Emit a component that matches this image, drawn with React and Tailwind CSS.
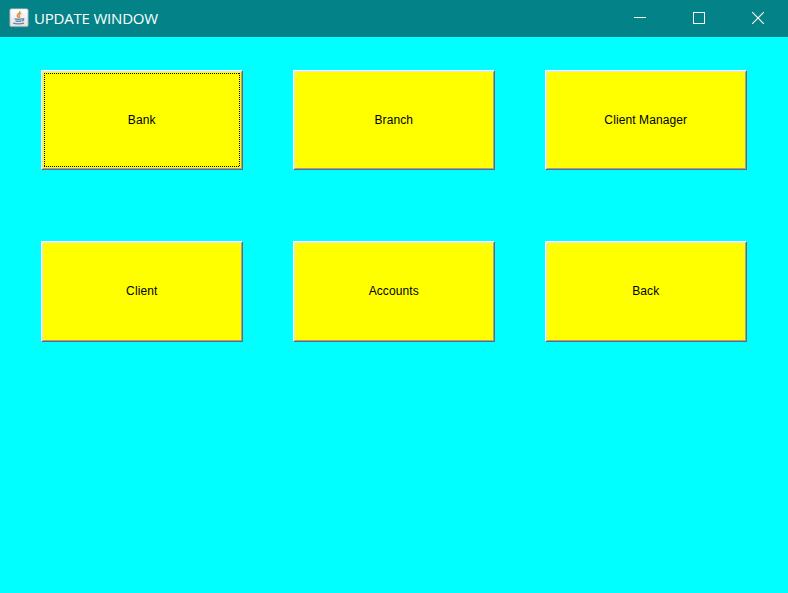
import React from "react";

const labels = ["Bank", "Branch", "Client Manager", "Client", "Accounts", "Back"];

function JavaIcon() {
  return (
    <svg className="ml-[9px] mt-[8px] h-[20px] w-[20px] shrink-0" viewBox="0 0 20 20">
      <defs>
        <linearGradient id="tile" x1="0" y1="0" x2="0" y2="1">
          <stop offset="0" stopColor="#ffffff" />
          <stop offset="1" stopColor="#dfe3e6" />
        </linearGradient>
      </defs>
      <rect x="0.8" y="0.7" width="18.4" height="18" rx="1.5" fill="url(#tile)" stroke="#8b9ba3" strokeWidth="0.8" />
      <path d="M10.8 3c.8 2-2.8 2.9-2.5 4.8.2 1 1.4 1.2 1.3 2.2M12.3 5.2c-2 .8-2.8 1.7-1.8 2.8.5.7.2 1.2-.3 1.8" fill="none" stroke="#e8954f" strokeWidth="1.5" />
      <path d="M5.5 10.8c1.5.6 6 .6 7.6 0M6.5 12.8c1.6.6 4 .6 5.6 0M4.2 15.2c2.5 1 8 1 10.8 0M13.2 10.8c2.3-.4 2 1.6-.6 2.2" fill="none" stroke="#6288a1" strokeWidth="1.3" />
    </svg>
  );
}

function BevelButton({ label, focused, tall }) {
  return (
    <button
      className={`${tall ? "h-[101px]" : "h-[100px]"} w-[202px] border border-t-white border-l-white border-r-[#696969] border-b-[#696969] bg-[#ffff00]`}
    >
      <span className="block h-full w-full border border-t-[#e3e3e3] border-l-[#e3e3e3] border-r-[#a0a0a0] border-b-[#a0a0a0]">
        <span
          className={`${tall ? "pb-[1px]" : "pb-0"} relative flex h-full w-full items-center justify-center pr-[0.5px] font-['Liberation_Sans',Arial,sans-serif] text-[12px] leading-[14px] tracking-[0.1px] text-black`}
        >
          {focused && (
            <svg className="absolute left-[1px] top-[1px] h-[94px] w-[196px]" shapeRendering="crispEdges">
              <path d="M0 .5H196M0 93.5H196M.5 0V94M195.5 0V94" stroke="#000" strokeDasharray="1 1" fill="none" />
            </svg>
          )}
          {label}
        </span>
      </span>
    </button>
  );
}

export default function App() {
  return (
    <div className="flex h-[593px] w-[788px] flex-col overflow-hidden bg-[#00ffff]">
      <header className="flex h-[37px] shrink-0 bg-[#038387] text-white">
        <JavaIcon />
        <h1 className="ml-[5px] mt-[7px] w-[126px] whitespace-nowrap font-['Open_Sans','Noto_Sans',sans-serif] text-[15px] leading-[22px] tracking-[-0.2px]">
          UPDATE WINDOW
        </h1>
        <div className="ml-auto flex w-[177px] shrink-0">
          <svg className="h-[37px] w-[59px]" shapeRendering="crispEdges">
            <path d="M23 17.5h12" stroke="#fff" />
          </svg>
          <svg className="h-[37px] w-[59px]" shapeRendering="crispEdges">
            <rect x="23.5" y="12.5" width="11" height="11" fill="none" stroke="#fff" />
          </svg>
          <svg className="h-[37px] w-[59px]">
            <path d="M23.2 12.2l11.6 11.6M34.8 12.2L23.2 23.8" stroke="#fff" strokeWidth="1.1" />
          </svg>
        </div>
      </header>
      <main className="grid grid-cols-[202px_202px_202px] grid-rows-[100px_101px] gap-x-[50px] gap-y-[71px] pl-[41px] pt-[33px]">
        {labels.map((label, i) => (
          <BevelButton key={label} label={label} focused={i === 0} tall={i > 2} />
        ))}
      </main>
    </div>
  );
}
